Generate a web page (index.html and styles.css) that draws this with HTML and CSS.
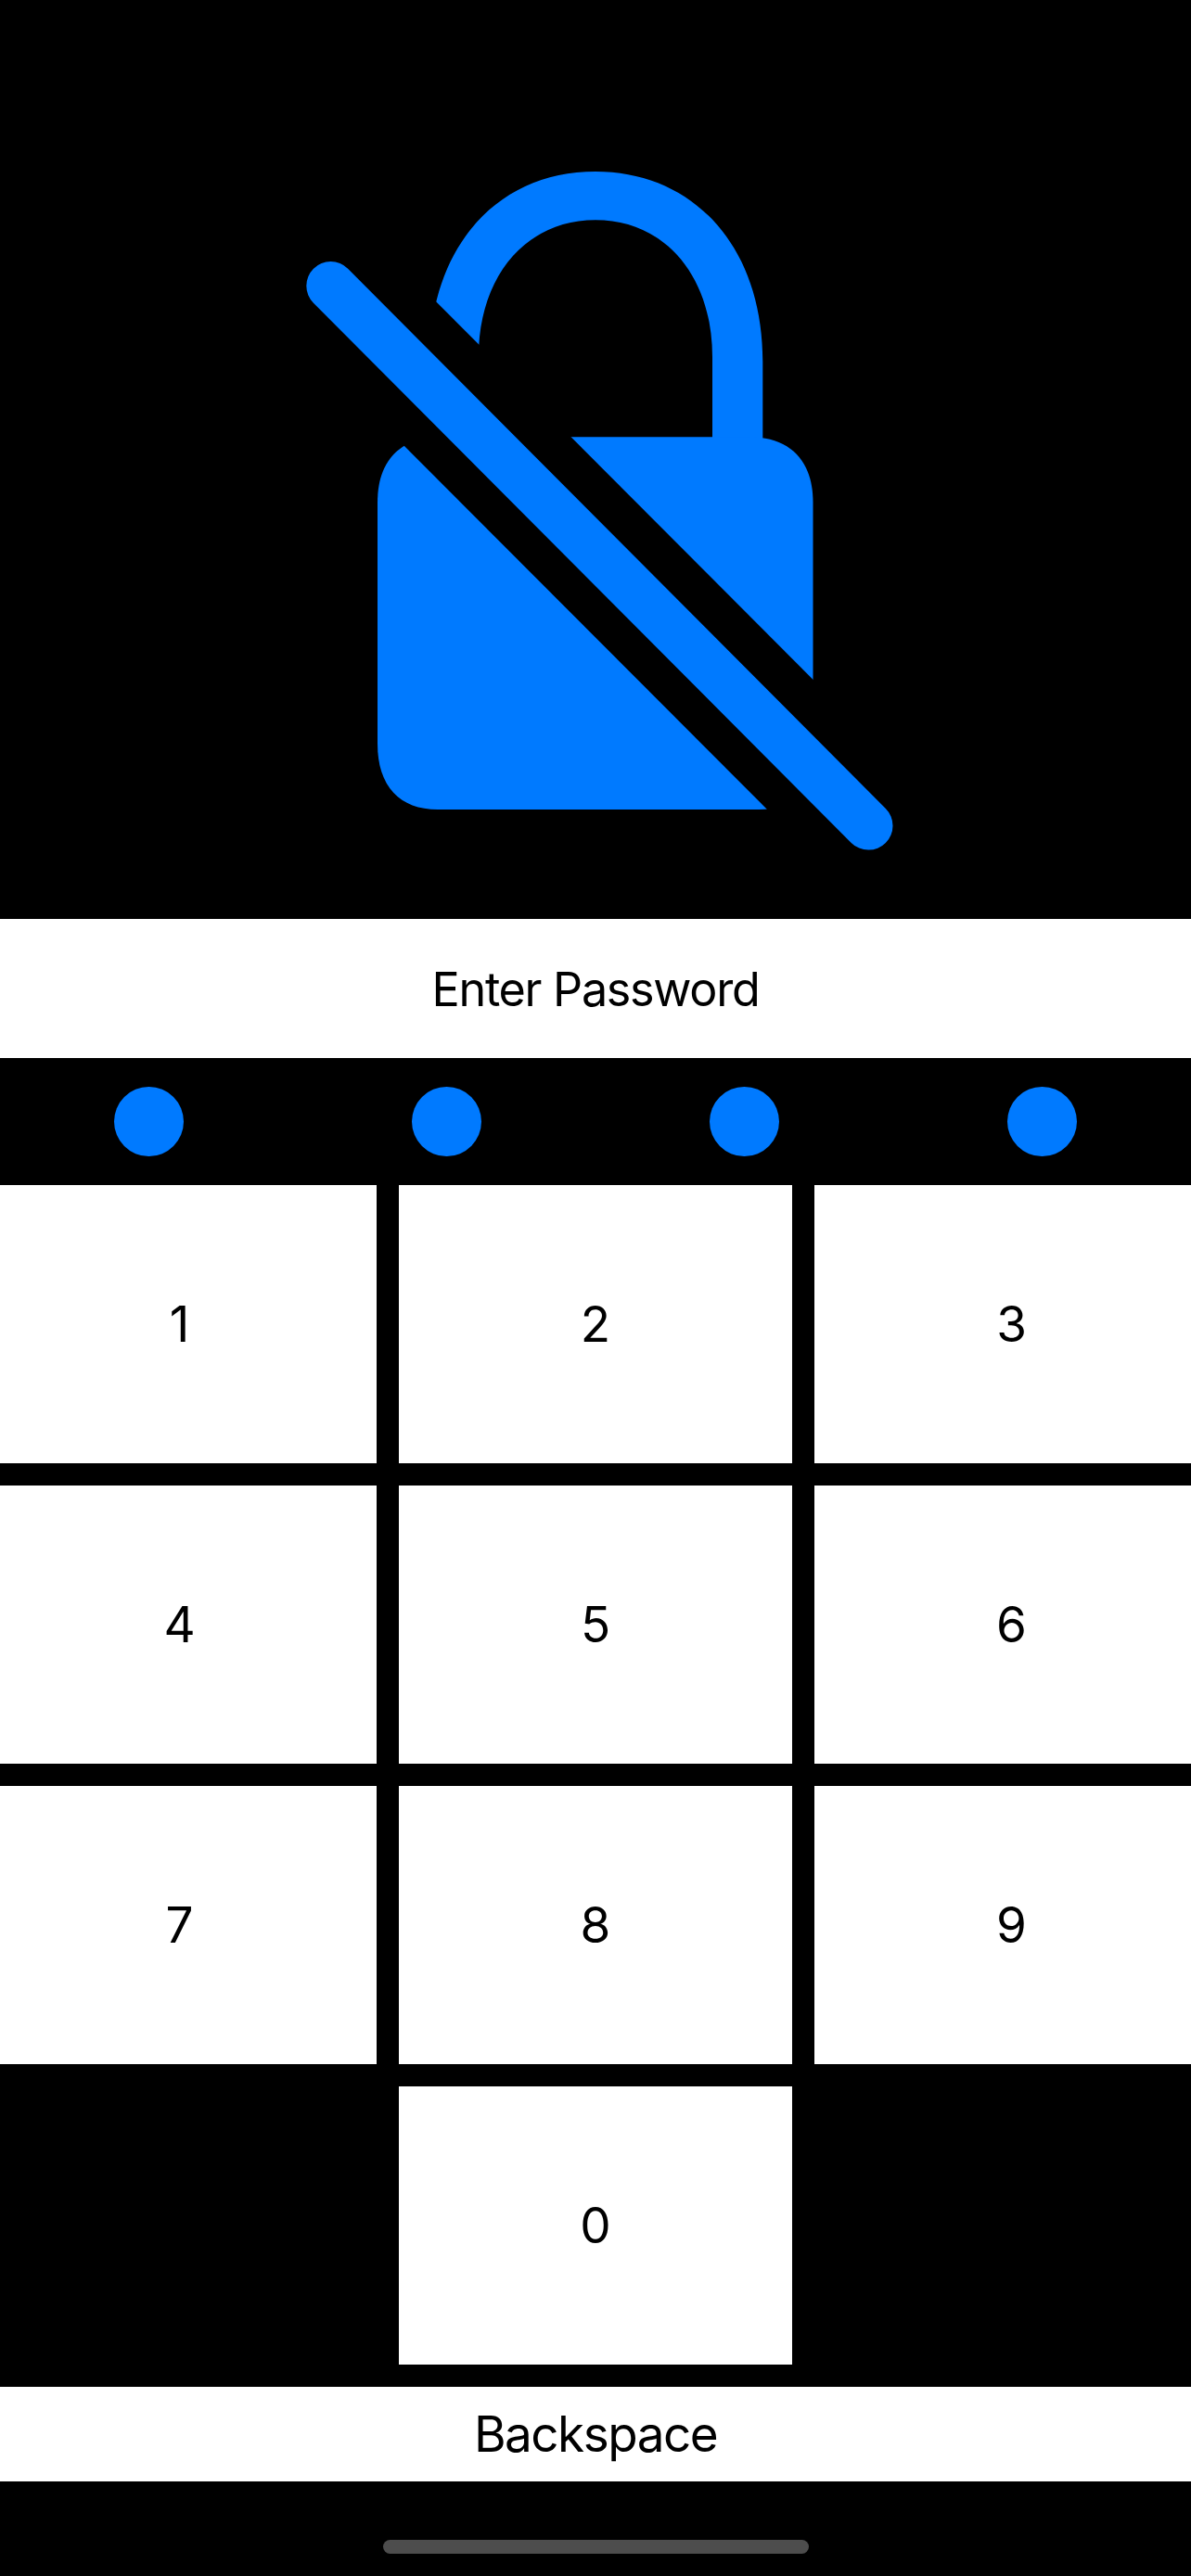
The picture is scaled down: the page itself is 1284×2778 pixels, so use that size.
FILE: index.html
```html
<!DOCTYPE html>
<html lang="en">
<head>
<meta charset="utf-8">
<title>Enter Password</title>
<link rel="stylesheet" href="styles.css">
</head>
<body>
<main class="screen">
  <div class="hero">
    <svg class="lock" viewBox="320 175 653 752" aria-hidden="true">
      <path class="tint" d="M463 480V390C463 265 537 185 642 185S822.3 265 822.3 390V480H768V385C768 298 717 237.3 642 237.3S516 298 516 385V480Z"/>
      <path class="tint" d="M475.5 471.2H808C852 471.2 876.5 497 876.5 542V802C876.5 848 858 873 818 873H472C431 873 407 848 407 802V542C407 497 431 471.2 475.5 471.2Z"/>
      <path class="gap" d="M395 250L915 771.5V961L395 440Z"/>
      <path class="slash" d="M356.5 308.3L936.3 890.4"/>
    </svg>
  </div>
  <h1 class="prompt">Enter Password</h1>
  <div class="dots">
    <span class="dot"></span><span class="dot"></span><span class="dot"></span><span class="dot"></span>
  </div>
  <div class="keypad">
    <button class="key left">1</button><button class="key">2</button><button class="key right">3</button>
    <button class="key left">4</button><button class="key">5</button><button class="key right">6</button>
    <button class="key left">7</button><button class="key">8</button><button class="key right">9</button>
    <button class="key zero">0</button>
  </div>
  <button class="backspace">Backspace</button>
  <div class="home"><span class="home-bar"></span></div>
</main>
</body>
</html>
```
FILE: styles.css
```css
* { box-sizing: border-box; }
body {
  margin: 0;
  background: #000;
  color: #000;
  font-family: Inter, "Liberation Sans", sans-serif;
}
.screen {
  display: flex;
  flex-direction: column;
  width: 1284px;
  height: 2778px;
  background: #000;
}
.hero {
  height: 991px;
  padding: 175px 0 0 320px;
}
.lock { display: block; width: 653px; height: 752px; }
.tint { fill: #007aff; }
.gap { fill: #000; }
.slash { stroke: #007aff; stroke-width: 52.4; stroke-linecap: round; }
.prompt {
  display: flex;
  align-items: center;
  justify-content: center;
  height: 150px;
  margin: 0;
  background: #fff;
  font-size: 50.3px;
  font-weight: 400;
  letter-spacing: -1.3px;
}
.dots {
  display: grid;
  grid-template-columns: repeat(4, 1fr);
  place-items: center;
  height: 137px;
}
.dot { width: 75px; height: 75px; border-radius: 50%; background: #007aff; }
.keypad {
  display: grid;
  grid-template-columns: 406px 424px 406px;
  grid-auto-rows: 300px;
  gap: 24px;
}
.key, .backspace {
  display: flex;
  align-items: center;
  justify-content: center;
  border: 0;
  padding: 0;
  background: #fff;
  color: #000;
  font: 400 53px Inter, "Liberation Sans", sans-serif;
}
.left { padding-right: 19px; }
.right { padding-left: 19px; }
.zero { grid-column: 2; }
.backspace { height: 102px; margin-top: 24px; letter-spacing: -1.5px; }
.home { display: flex; justify-content: center; padding-top: 63px; }
.home-bar { width: 459px; height: 15px; border-radius: 8px; background: #4d4d4d; }
```
